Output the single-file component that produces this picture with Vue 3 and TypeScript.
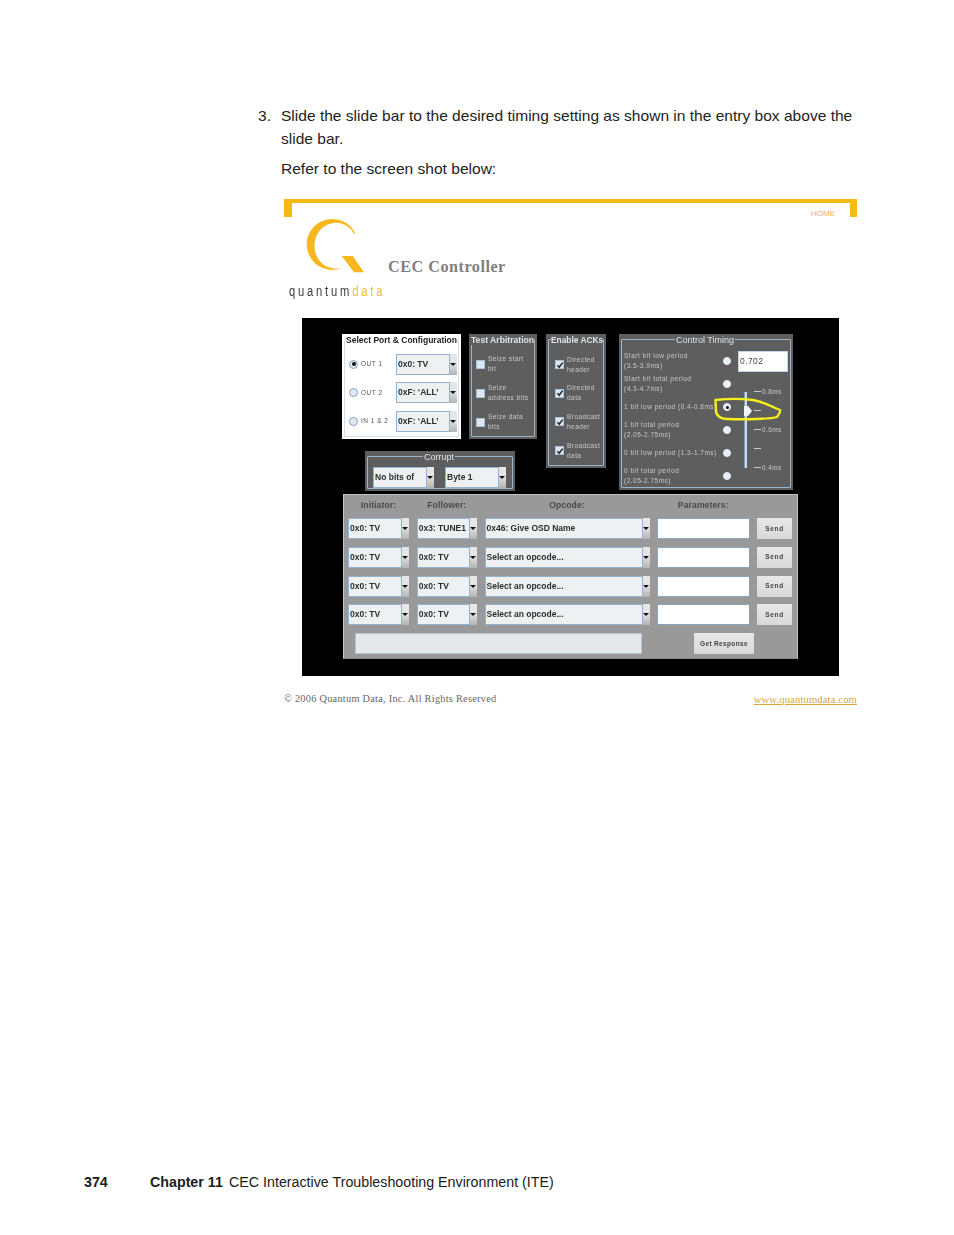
<script setup lang="ts">
interface Cmd { init: string; foll: string; op: string }
const ports = [
  { label: 'OUT 1', value: '0x0: TV', on: true },
  { label: 'OUT 2', value: '0xF: ‘ALL’', on: false },
  { label: 'IN 1 & 2', value: '0xF: ‘ALL’', on: false },
]
const arbitration = [['Seize start', 'bit'], ['Seize', 'address bits'], ['Seize data', 'bits']]
const acks = [['Directed', 'header'], ['Directed', 'data'], ['Broadcast', 'header'], ['Broadcast', 'data']]
const timing = [
  { lines: ['Start bit low period', '(3.5-3.9ms)'], on: false },
  { lines: ['Start bit total period', '(4.3-4.7ms)'], on: false },
  { lines: ['1 bit low period (0.4-0.8ms)'], on: true },
  { lines: ['1 bit total period', '(2.05-2.75ms)'], on: false },
  { lines: ['0 bit low period (1.3-1.7ms)'], on: false },
  { lines: ['0 bit total period', '(2.05-2.75ms)'], on: false },
]
const ticks = ['0.8ms', '', '0.6ms', '', '0.4ms']
const commands: Cmd[] = [
  { init: '0x0: TV', foll: '0x3: TUNE1', op: '0x46: Give OSD Name' },
  { init: '0x0: TV', foll: '0x0: TV', op: 'Select an opcode...' },
  { init: '0x0: TV', foll: '0x0: TV', op: 'Select an opcode...' },
  { init: '0x0: TV', foll: '0x0: TV', op: 'Select an opcode...' },
]
</script>

<template>
  <div class="page">
    <div class="step">
      <span class="num">3.</span>
      <div class="body">
        <p class="p1">Slide the slide bar to the desired timing setting as shown in the entry box above the slide bar.</p>
        <p class="p2">Refer to the screen shot below:</p>
      </div>
    </div>

    <div class="figure">
      <div class="header">
        <div class="bar"></div>
        <div class="tabs">
          <span class="tab"></span>
          <span class="home">HOME</span>
          <span class="tab tab-r"></span>
        </div>
        <div class="brand">
          <div class="logo">
            <svg class="q" viewBox="289 217 80 58" width="80" height="58">
              <path d="M355.500 234A25.500 25.500 0 1 0 343 267.500A21.500 23 0 1 1 354.400 234Z" fill="#f7b71d" />
              <path d="M341.700 256H352.700L364 272.300H354Z" fill="#f7b71d" />
            </svg>
            <div class="wordmark">quantum<span class="data">data</span></div>
          </div>
          <div class="title">CEC Controller</div>
        </div>
      </div>

      <div class="app">
        <div class="top">
          <div class="left-col">
            <div class="left-row">
              <div class="panel port">
                <fieldset class="fs fs-port">
                  <legend>Select Port &amp; Configuration</legend>
                  <div v-for="p in ports" :key="p.label" class="port-row">
                    <span class="radio" :class="{ on: p.on }"></span>
                    <span class="port-label">{{ p.label }}</span>
                    <span class="sel sel-port"><span class="sel-text">{{ p.value }}</span><span class="arrow"></span></span>
                  </div>
                </fieldset>
              </div>
              <div class="panel test">
                <fieldset class="fs fs-check">
                  <legend>Test Arbitration</legend>
                  <div v-for="a in arbitration" :key="a[1]" class="check-row">
                    <span class="check"></span>
                    <span class="check-label">{{ a[0] }}<br />{{ a[1] }}</span>
                  </div>
                </fieldset>
              </div>
            </div>
            <div class="panel corrupt">
              <fieldset class="fs fs-corrupt">
                <legend>Corrupt</legend>
                <span class="sel sel-cor"><span class="sel-text">No bits of</span><span class="arrow"></span></span>
                <span class="sel sel-cor"><span class="sel-text">Byte 1</span><span class="arrow"></span></span>
              </fieldset>
            </div>
          </div>

          <div class="panel enable">
            <fieldset class="fs fs-ack">
              <legend>Enable ACKs</legend>
              <div v-for="a in acks" :key="a.join()" class="check-row">
                <span class="check ticked">
                  <svg viewBox="0 0 8 8" width="8" height="8"><path d="M1.500 4.200 3.200 6.200 6.600 1.600" fill="none" stroke="#222" stroke-width="1.500" /></svg>
                </span>
                <span class="check-label">{{ a[0] }}<br />{{ a[1] }}</span>
              </div>
            </fieldset>
          </div>

          <div class="panel control">
            <fieldset class="fs fs-control">
              <legend>Control Timing</legend>
              <div class="timing">
                <div class="timing-rows">
                  <div v-for="t in timing" :key="t.lines[0]" class="timing-row">
                    <span class="timing-label"><span v-for="l in t.lines" :key="l" class="tl">{{ l }}</span></span>
                    <span class="radio small" :class="{ on: t.on }"></span>
                  </div>
                </div>
                <div class="entry-col">
                  <div class="entry">0.702</div>
                  <div class="slider">
                    <div class="track"></div>
                    <div class="tick-col">
                      <div v-for="(t, i) in ticks" :key="i" class="tick"><i></i>{{ t }}</div>
                    </div>
                    <svg class="thumb" viewBox="0 0 8 10" width="8" height="10"><path d="M0 0H4L8 5 4 10H0Z" fill="#f2f5f8" /></svg>
                  </div>
                </div>
              </div>
            </fieldset>
            <svg class="mark" viewBox="619 334 174 156" width="174" height="156">
              <path d="M715.500 400C728 398.500 745 399 753 400C764 402 768 405 780 410C781 412 779 414 777 417C772 419 745 419.500 727 419C720 419 716 415 716 411Z" fill="none" stroke="#f4ee1c" stroke-width="2.400" />
            </svg>
          </div>
        </div>

        <div class="send-panel">
          <div class="grid heads">
            <span>Initiator:</span><span>Follower:</span><span>Opcode:</span><span>Parameters:</span><span></span>
          </div>
          <div v-for="(c, i) in commands" :key="i" class="grid cmd">
            <span class="sel"><span class="sel-text">{{ c.init }}</span><span class="arrow"></span></span>
            <span class="sel"><span class="sel-text">{{ c.foll }}</span><span class="arrow"></span></span>
            <span class="sel"><span class="sel-text">{{ c.op }}</span><span class="arrow"></span></span>
            <span class="param"></span>
            <span class="btn">Send</span>
          </div>
          <div class="response">
            <span class="status"></span>
            <span class="btn get">Get Response</span>
          </div>
        </div>
      </div>

      <div class="legal">
        <span class="copy">© 2006 Quantum Data, Inc. All Rights Reserved</span>
        <span class="link">www.quantumdata.com</span>
      </div>
    </div>

    <div class="footer">
      <span class="page-no">374</span>
      <span class="chapter">Chapter 11</span>
      <span>CEC Interactive Troubleshooting Environment (ITE)</span>
    </div>
  </div>
</template>

<style scoped>
.page {
  height: 1235px;
  box-sizing: border-box;
  padding-top: 105px;
  display: flex;
  flex-direction: column;
  font-family: "Liberation Sans", Arial, sans-serif;
  font-size: 14.25px;
  line-height: 22.5px;
  color: #1c1c1c;
  background: #fff;
}
.step { display: flex; margin-left: 258px; width: 600px; font-size: 15.55px; color: #222; }
.num { width: 23px; flex: none; }
.body { width: 575px; }
.body p { margin: 0; }
.p2 { margin-top: 8px !important; }

.figure { margin: 18px 0 0 284px; width: 573px; }
.header { height: 119px; display: flex; flex-direction: column; }
.bar { height: 4px; background: #f7b913; }
.tabs { display: flex; height: 14px; }
.tab { width: 8px; background: #f7b913; }
.tab-r { width: 7px; }
.home {
  margin: 6px 15px 0 auto;
  font-size: 8px;
  line-height: 10px;
  color: #f0b04f;
}
.brand { display: flex; }
.logo { margin-left: 5px; width: 99px; flex: none; }
.q { display: block; }
.wordmark {
  margin-top: 9px;
  font-size: 14px;
  line-height: 14px;
  letter-spacing: 3.5px;
  color: #3c3c3c;
  white-space: nowrap;
  transform: scaleX(.8);
  transform-origin: left center;
}
.data { color: #f5b942; }
.title {
  margin-top: 40px;
  font-family: "Liberation Serif", serif;
  font-size: 16.2px;
  line-height: 20px;
  font-weight: bold;
  letter-spacing: .5px;
  color: #808080;
}

.app {
  margin-left: 18px;
  width: 537px;
  height: 358px;
  box-sizing: border-box;
  padding: 16px 0 0 40px;
  background: #000;
  filter: blur(.35px);
  font-size: 8.5px;
  line-height: 10px;
}
.top { display: flex; height: 156px; }
.left-col { width: 195px; flex: none; }
.left-row { display: flex; gap: 8px; height: 105px; }
.panel {
  box-sizing: border-box;
  background: #5e5e5e;
  padding: 1px 2px 2px;
  display: flex;
  position: relative;
}
.fs {
  flex: 1;
  min-width: 0;
  margin: 0;
  padding: 0;
  border: 1px solid #9db4ca;
  border-radius: 1px;
}
.fs legend {
  padding: 0 1px;
  font-weight: bold;
  font-size: 8.6px;
  line-height: 10px;
  color: #dfe3e6;
  white-space: nowrap;
}
.port { width: 119px; background: #fff; }
.port .fs { border-color: #d5dfe9; }
.port legend { color: #222; font-size: 8.5px; padding: 0; margin-left: -3px; }
.fs-port { display: flex; flex-direction: column; gap: 7.500px; padding: 9px 0 0 4px; }
.port-row { display: flex; align-items: center; height: 21px; }
.port-label {
  width: 35px;
  flex: none;
  font-size: 6.500px;
  letter-spacing: .5px;
  color: #555;
  white-space: nowrap;
}
.radio {
  width: 9px;
  height: 9px;
  flex: none;
  margin-right: 3px;
  border-radius: 50%;
  box-sizing: border-box;
  background: #dfeaf5;
  border: 1px solid #86a2bd;
  position: relative;
}
.radio.on::after {
  content: "";
  position: absolute;
  inset: 1.500px;
  border-radius: 50%;
  background: #111;
}
.test { width: 68px; }
.test legend { margin-left: -5px; padding: 0; font-size: 8.600px; }
.fs-check { display: flex; flex-direction: column; gap: 9px; padding: 9.500px 0 0 4px; }
.check-row { display: flex; align-items: center; height: 20px; gap: 3px; }
.check {
  width: 9px;
  height: 9px;
  flex: none;
  background: #dbe8f4;
  border: 1px solid #a9c1d8;
  box-sizing: border-box;
  display: flex;
  align-items: center;
  justify-content: center;
}
.check svg { flex: none; }
.check-label {
  font-size: 6.600px;
  line-height: 10px;
  letter-spacing: .4px;
  color: #c9c9c9;
  white-space: nowrap;
}
.enable { width: 60px; height: 134px; margin: 0 13px 0 9px; flex: none; }
.enable legend { padding: 0; margin-left: -4px; font-size: 8.400px; }
.fs-ack { display: flex; flex-direction: column; gap: 8.700px; padding: 10px 0 0 6px; }
.corrupt { width: 150px; height: 40px; margin: 12px 0 0 23px; }
.fs-corrupt { display: flex; gap: 11px; padding: 5px 0 0 5px; }
.fs-corrupt legend { margin-left: 50px; font-weight: normal; font-size: 9px; }

.control { width: 174px; height: 156px; flex: none; }
.fs-control legend { margin-left: 53px; font-weight: normal; font-size: 9px; }
.timing { display: flex; position: relative; }
.timing-rows { width: 114px; flex: none; padding: 5px 0 0 2px; box-sizing: border-box; }
.timing-row { display: flex; align-items: center; height: 23px; }
.timing-label {
  width: 99px;
  flex: none;
  overflow: hidden;
  font-size: 6.500px;
  line-height: 10px;
  letter-spacing: .5px;
  color: #c9c9c9;
  white-space: nowrap;
}
.tl { display: block; }
.radio.small { width: 8px; height: 8px; background: #e9eff6; border-color: #e9eff6; }
.radio.small.on { background: #e9eff6; }
.radio.small.on::after { inset: 1.500px; }
.entry-col { padding: 6px 0 0 2px; }
.entry {
  width: 50px;
  height: 21px;
  box-sizing: border-box;
  background: #fff;
  border: 1px solid #c5d4e2;
  padding-left: 1px;
  font-size: 8.500px;
  line-height: 19px;
  letter-spacing: .4px;
  color: #444;
}
.slider { position: relative; display: flex; height: 76px; margin-top: 20px; padding-left: 6px; }
.track { width: 3px; background: #c7daee; border-left: 1px solid #7f9ab6; box-sizing: border-box; }
.tick-col {
  margin: -5px 0 -5px 7px;
  display: flex;
  flex-direction: column;
  justify-content: space-between;
}
.tick {
  display: flex;
  align-items: center;
  height: 10px;
  font-size: 6.500px;
  letter-spacing: .4px;
  color: #c9c9c9;
}
.tick i { width: 7px; height: 1px; margin-right: 1px; background: #c9c9c9; }
.thumb { position: absolute; left: 6px; top: 14px; }
.mark { position: absolute; left: 0; top: 0; pointer-events: none; }

.send-panel {
  margin: 4px 0 0 1px;
  width: 455px;
  height: 165px;
  box-sizing: border-box;
  background: #999;
  border: 1px solid #c3c3c3;
  border-bottom-color: #8a8a8a;
  padding: 0 0 0 4px;
}
.grid {
  display: grid;
  grid-template-columns: 61px 60px 165px 92px 35px;
  column-gap: 7.750px;
}
.heads {
  height: 21px;
  margin-bottom: 2.500px;
  align-items: center;
  text-align: center;
  font-size: 8.600px;
  font-weight: bold;
  letter-spacing: .1px;
  color: #4a4a4a;
}
.cmd { height: 21px; margin-bottom: 7.800px; }
.sel { display: inline-flex; height: 21px; }
.sel-text {
  flex: 1;
  min-width: 0;
  box-sizing: border-box;
  background: #eef0f2;
  border: 1px solid #94b2cf;
  padding-left: 1px;
  font-size: 8.500px;
  font-weight: bold;
  line-height: 19px;
  color: #2d2d2d;
  white-space: nowrap;
  overflow: hidden;
}
.arrow {
  width: 7px;
  flex: none;
  background: linear-gradient(#e6e6e6, #e6e6e6 40%, #b4b4b4);
  position: relative;
}
.arrow::after {
  content: "";
  position: absolute;
  left: 0;
  top: 9px;
  border: 3.500px solid transparent;
  border-top: 3px solid #111;
  border-bottom: 0;
}
.sel-port { width: 61px; }
.sel-cor { width: 61px; }
.param { background: #fff; border: 1px solid #8ea4ba; border-width: 1px 0 1px 1px; }
.btn {
  display: flex;
  align-items: center;
  justify-content: center;
  background: linear-gradient(#e8e8e8, #d8d8d8);
  font-size: 6.500px;
  font-weight: bold;
  letter-spacing: .7px;
  color: #444;
  white-space: nowrap;
}
.response { display: flex; height: 21px; padding-left: 7px; }
.status { width: 287px; background: #e6e7e8; border: 1px solid #b4c4d3; box-sizing: border-box; }
.get { width: 60px; margin-left: 52px; letter-spacing: .35px; }

.legal {
  display: flex;
  justify-content: space-between;
  margin-top: 16px;
  font-family: "Liberation Serif", serif;
  line-height: 14px;
}
.copy { font-size: 10.300px; letter-spacing: .27px; color: #666; }
.link { font-size: 10.700px; letter-spacing: .1px; color: #dca63a; text-decoration: underline; }

.footer {
  margin-top: auto;
  margin-bottom: 42px;
  padding-left: 84px;
  display: flex;
}
.page-no { width: 66px; font-weight: bold; }
.chapter { width: 79px; font-weight: bold; }
</style>
